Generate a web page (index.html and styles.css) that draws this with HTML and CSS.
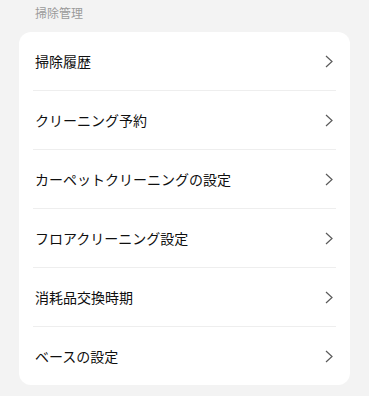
FILE: index.html
```html
<!DOCTYPE html>
<html lang="ja">
<head>
<meta charset="utf-8">
<link rel="stylesheet" href="styles.css">
</head>
<body>
<div class="section-title">掃除管理</div>
<div class="card">
  <div class="row"><span class="label">掃除履歴</span><svg class="chev" width="8" height="13" viewBox="0 0 8 13"><path d="M1 1 L7 6.5 L1 12" fill="none" stroke="#5a5a5a" stroke-width="1.2"/></svg></div>
  <div class="row"><span class="label">クリーニング予約</span><svg class="chev" width="8" height="13" viewBox="0 0 8 13"><path d="M1 1 L7 6.5 L1 12" fill="none" stroke="#5a5a5a" stroke-width="1.2"/></svg></div>
  <div class="row"><span class="label">カーペットクリーニングの設定</span><svg class="chev" width="8" height="13" viewBox="0 0 8 13"><path d="M1 1 L7 6.5 L1 12" fill="none" stroke="#5a5a5a" stroke-width="1.2"/></svg></div>
  <div class="row"><span class="label">フロアクリーニング設定</span><svg class="chev" width="8" height="13" viewBox="0 0 8 13"><path d="M1 1 L7 6.5 L1 12" fill="none" stroke="#5a5a5a" stroke-width="1.2"/></svg></div>
  <div class="row"><span class="label">消耗品交換時期</span><svg class="chev" width="8" height="13" viewBox="0 0 8 13"><path d="M1 1 L7 6.5 L1 12" fill="none" stroke="#5a5a5a" stroke-width="1.2"/></svg></div>
  <div class="row"><span class="label">ベースの設定</span><svg class="chev" width="8" height="13" viewBox="0 0 8 13"><path d="M1 1 L7 6.5 L1 12" fill="none" stroke="#5a5a5a" stroke-width="1.2"/></svg></div>
</div>
</body>
</html>
```

FILE: styles.css
```css
html, body {
  margin: 0;
  padding: 0;
  background: #f3f3f3;
  font-family: "Noto Sans CJK JP", "Noto Sans", sans-serif;
}
.section-title {
  padding: 5px 0 0 35px;
  font-size: 12px;
  line-height: 16px;
  color: #9a9a9a;
  margin-bottom: 11px;
}
.card {
  margin: 0 19px;
  background: #ffffff;
  border-radius: 12px;
  padding: 0 14px 0 14px;
}
.row {
  display: flex;
  align-items: center;
  justify-content: space-between;
  height: 58px;
  border-bottom: 1px solid #eeeeee;
  padding: 0 3px 0 2px;
}
.row:last-child {
  border-bottom: none;
}
.label {
  font-size: 14px;
  font-weight: 400;
  color: #0f0f0f;
  line-height: 20px;
}
.chev {
  display: block;
}
```
